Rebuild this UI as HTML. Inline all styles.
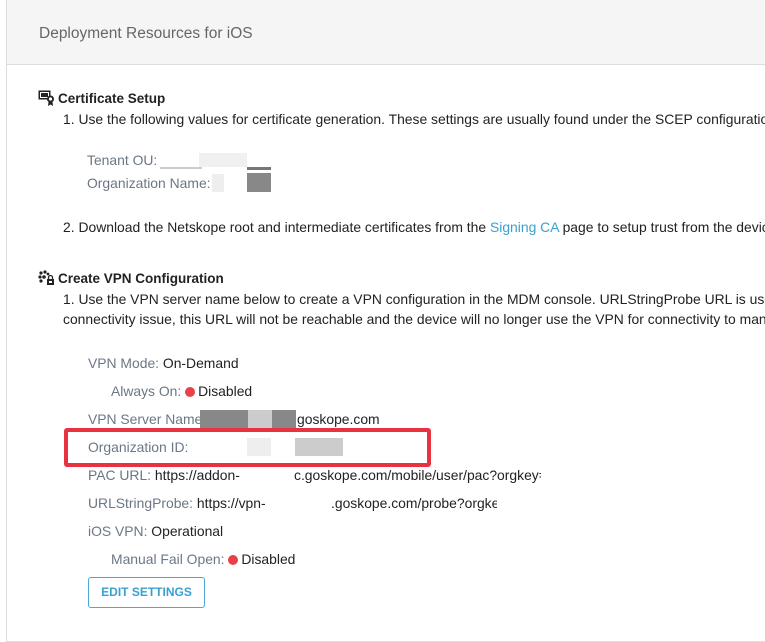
<!DOCTYPE html>
<html><head><meta charset="utf-8"><style>
html,body{margin:0;padding:0;background:#fff;}
body{width:765px;height:630px;overflow:hidden;position:relative;font-family:"Liberation Sans",sans-serif;font-size:13.9px;color:#222;}
.panel{position:absolute;left:6px;top:0;width:770px;height:640px;border:1px solid #ddd;}
.hdr{position:absolute;left:6px;top:0;width:770px;height:64px;background:#f5f5f5;border-bottom:1px solid #ddd;border-left:1px solid #ddd;}
.t{position:absolute;white-space:nowrap;line-height:16px;}
.lbl{color:#6b7785;}
.dot{display:inline-block;width:10px;height:10px;border-radius:50%;background:#e8414a;vertical-align:-1px;margin-right:3px;}
.b{position:absolute;}
</style></head><body>
<div class="panel"></div>
<div class="hdr"></div>
<div class="t" style="left:39px;top:26px;font-size:15.5px;color:#666;">Deployment Resources for iOS</div>

<svg class="b" style="left:38px;top:90px" width="18" height="16" viewBox="0 0 18 16"><rect x="0.5" y="0.5" width="12" height="9" fill="#222"/><rect x="2" y="2" width="9" height="6" fill="#fff"/><rect x="3" y="3" width="7" height="4" fill="#222"/><circle cx="12.5" cy="9" r="3.5" fill="#222"/><circle cx="12.5" cy="9" r="1.6" fill="#fff"/><path d="M10.5 12 L10 16 L12.5 14.5 L15 16 L14.5 12Z" fill="#222"/></svg>
<div class="t" style="left:58px;top:91px;font-weight:bold;font-size:13.5px;">Certificate Setup</div>
<div class="t" style="left:63px;top:111px;">1. Use the following values for certificate generation. These settings are usually found under the SCEP configuration</div>
<div class="t lbl" style="left:87px;top:152px;">Tenant OU:</div>
<div class="b" style="left:160px;top:167px;width:42px;height:2px;background:#ccc"></div>
<div class="b" style="left:199px;top:153px;width:48px;height:14px;background:#f0f0f2"></div>
<div class="b" style="left:247px;top:167px;width:24px;height:3px;background:#777"></div>
<div class="t lbl" style="left:87px;top:175px;">Organization Name:</div>
<div class="b" style="left:212px;top:174px;width:12px;height:18px;background:#eee"></div>
<div class="b" style="left:247px;top:173px;width:24px;height:19px;background:#888"></div>
<div class="t" style="left:63px;top:219px;">2. Download the Netskope root and intermediate certificates from the <span style="color:#3aa0d0">Signing CA</span> page to setup trust from the device</div>

<svg class="b" style="left:38px;top:270px" width="18" height="16" viewBox="0 0 18 16"><g fill="#222"><circle cx="3" cy="3" r="1.6"/><circle cx="7" cy="2" r="1.6"/><circle cx="2" cy="7" r="1.6"/><circle cx="6" cy="7" r="1.8"/><circle cx="3" cy="11" r="1.6"/><circle cx="10" cy="4" r="1.4"/></g><rect x="9" y="9" width="7" height="6" fill="#222"/><path d="M10.5 9 V7.5 a2 2 0 0 1 4 0 V9" stroke="#222" stroke-width="1.3" fill="none"/><rect x="11" y="11" width="3" height="2" fill="#fff"/></svg>
<div class="t" style="left:58px;top:271px;font-weight:bold;font-size:13.5px;">Create VPN Configuration</div>
<div class="t" style="left:63px;top:291px;">1. Use the VPN server name below to create a VPN configuration in the MDM console. URLStringProbe URL is used to</div>
<div class="t" style="left:63px;top:311px;">connectivity issue, this URL will not be reachable and the device will no longer use the VPN for connectivity to manage</div>

<div class="t" style="left:88px;top:355px;"><span class="lbl">VPN Mode:</span> On-Demand</div>
<div class="t" style="left:111px;top:383px;"><span class="lbl">Always On:</span> <span class="dot"></span>Disabled</div>
<div class="t" style="left:88px;top:411px;"><span class="lbl">VPN Server Name:</span></div>
<div class="b" style="left:200px;top:410px;width:96px;height:18px;background:#888"></div>
<div class="b" style="left:248px;top:410px;width:24px;height:18px;background:#ccc"></div>
<div class="t" style="left:297px;top:411px;">goskope.com</div>
<div class="b" style="left:64px;top:428px;width:359px;height:31px;border:4px solid #e8323f;border-radius:3px;"></div>
<div class="t lbl" style="left:88px;top:439px;">Organization ID:</div>
<div class="b" style="left:247px;top:438px;width:24px;height:18px;background:#eee"></div>
<div class="b" style="left:295px;top:438px;width:48px;height:18px;background:#ccc"></div>
<div class="t" style="left:88px;top:467px;"><span class="lbl">PAC URL:</span> https://addon-</div>
<div class="t" style="left:294px;top:467px;width:247px;overflow:hidden;">c.goskope.com/mobile/user/pac?orgkey=</div>
<div class="t" style="left:88px;top:495px;"><span class="lbl">URLStringProbe:</span> https://vpn-</div>
<div class="t" style="left:331px;top:495px;width:166px;overflow:hidden;">.goskope.com/probe?orgkey</div>
<div class="t" style="left:88px;top:523px;"><span class="lbl">iOS VPN:</span> Operational</div>
<div class="t" style="left:111px;top:551px;"><span class="lbl">Manual Fail Open:</span> <span class="dot"></span>Disabled</div>
<div class="b" style="left:88px;top:577px;width:115px;height:29px;border:1px solid #4aa8d6;border-radius:3px;color:#3a9fd0;font-weight:bold;font-size:12px;text-align:center;line-height:29px;">EDIT SETTINGS</div>
</body></html>
